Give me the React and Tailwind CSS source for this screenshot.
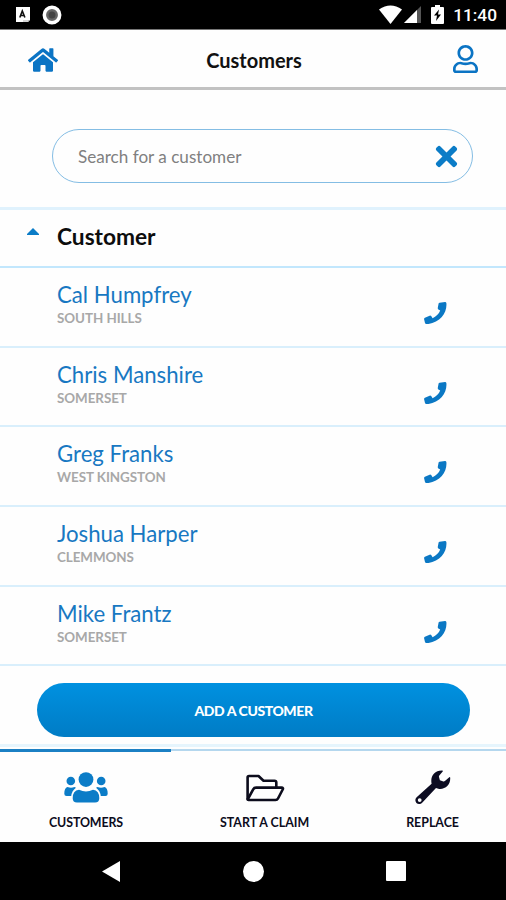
import React from "react";
import { FaHome, FaRegUser, FaTimes } from "react-icons/fa";

const customers = [
  { name: "Cal Humpfrey", city: "SOUTH HILLS" },
  { name: "Chris Manshire", city: "SOMERSET" },
  { name: "Greg Franks", city: "WEST KINGSTON" },
  { name: "Joshua Harper", city: "CLEMMONS" },
  { name: "Mike Frantz", city: "SOMERSET" },
];

function PhoneIcon() {
  return (
    <svg className="mt-[18px]" width="23" height="22" viewBox="0 0 23 22">
      <path
        d="M15.6.7 21 0q1.3 0 1.4 1.3C22.8 6 21.2 11 17.8 15 14.6 18.8 9.8 21.2 4.5 21.9L2.3 22q-1 0-1.3-1L.1 17.300q-.2-1.100.8-1.600L5.600 13.700q1-.3 1.600.4L8.600 16.200C12 14.800 14.900 11.800 16.200 8.500L14.400 7.400q-.8-.6-.6-1.600L14.600 1.600q.2-.8 1-.9z"
        fill="#0b78c4"
      />
    </svg>
  );
}

function UsersIcon() {
  return (
    <svg width="44" height="31" viewBox="0 0 44 31" fill="#0b7cc7">
      <circle cx="22" cy="7.6" r="7.4" />
      <circle cx="6.8" cy="9" r="4.3" />
      <circle cx="37.2" cy="9" r="4.3" />
      <path d="M15 17.7q7 3.4 14 0 6.3.5 6.3 8.6 0 4.2-4.3 4.2H13q-4.3 0-4.3-4.2 0-8.1 6.3-8.6z" />
      <path d="M3.5 15Q7 16.5 10.5 15l1.5.7Q7.800 18.800 7.200 24H2.500Q.3 24 .3 21.700.2 16 3.500 15z" />
      <path d="M40.500 15Q37 16.500 33.500 15l-1.500.7q4.200 3.100 4.800 8.300h4.700q2.200 0 2.200-2.300.1-5.700-3.200-6.700z" />
    </svg>
  );
}

function FolderIcon() {
  return (
    <svg width="40" height="28" viewBox="0 0 40 28" fill="none" stroke="#0c0c1c" strokeWidth="2.6" strokeLinejoin="round">
      <path d="M2.6 25.5V3.5q0-1.5 1.5-1.5H13.5L18.5 6.7H29.5q1.8 0 1.8 1.8V13.5" />
      <path d="M2.6 25.5 8.2 15.3q.9-1.7 2.8-1.7H36.5q2.2 0 1.2 1.9L33 24.5q-.8 1.5-2.5 1.5H3.5q-.9 0-.9-.5z" />
    </svg>
  );
}

function WrenchIcon() {
  return (
    <svg width="36" height="35" viewBox="0 0 36 35">
      <path
        fillRule="evenodd"
        d="M27.3.5q.9.2.4.9L24.3 5.5Q23.8 6.2 24 7L24.9 10.3 28.4 11.5q.8.2 1.5-.4L34.3 7.3q.8-.5.9.4C35.7 14.5 30.5 19.5 24.2 18.9q-1.7-.1-3.2-.8L7.4 32.5C5.4 34.6 2.8 34.4 1.4 32.9-.1 31.3 0 28.9 1.9 27.1L16.6 13.7C15 6.2 19.5.2 27.3.5zM4.7 28.2a1.9 1.9 0 1 0 0 3.8 1.9 1.9 0 1 0 0-3.8z"
        fill="#0c0c22"
      />
    </svg>
  );
}

function StatusBar() {
  return (
    <div className="flex h-[30px] shrink-0 items-center justify-between border-b border-[#777] bg-black pl-4 pr-[9px]">
      <div className="flex items-center gap-[11px]">
        <svg width="15" height="16" viewBox="0 0 15 16">
          <path d="M0 0h14v13l-2 2H0z" fill="#fff" />
          <path d="M3.8 10.5 6.3 4l2.6 6.5M5 8.5h2.8" fill="none" stroke="#111" strokeWidth="1.6" />
          <path d="M7 14h6v-1" fill="none" stroke="#aaa" strokeWidth="1" />
        </svg>
        <svg width="20" height="20" viewBox="0 0 20 20">
          <circle cx="10" cy="10" r="7.7" fill="#666" stroke="#fff" strokeWidth="3.5" />
          <circle cx="10" cy="10" r="3.5" fill="#444" />
        </svg>
      </div>
      <div className="flex items-center">
        <svg width="23" height="19" viewBox="0 0 23 19">
          <path d="M0 4.5Q11.5-3.5 23 4.5L11.5 19z" fill="#fff" />
        </svg>
        <svg className="ml-[2px]" width="17" height="18" viewBox="0 0 17 18">
          <path d="M17 1v17H0z" fill="#555" />
          <path d="M13 5v13H0z" fill="#fff" />
        </svg>
        <svg className="ml-[10px]" width="13" height="19" viewBox="0 0 13 19">
          <path d="M4 0h5v2h3q1 0 1 1v15q0 1-1 1H1q-1 0-1-1V3q0-1 1-1h3z" fill="#fff" />
          <path d="M8 4.5 3 10.5h3L5 16l5-6.5H7z" fill="#000" />
        </svg>
        <span className="ml-[9px] pt-[3px] font-['Roboto',sans-serif] text-[17.3px] font-medium leading-none text-white">11:40</span>
      </div>
    </div>
  );
}

export default function App() {
  return (
    <div className="flex h-[900px] w-[506px] flex-col overflow-hidden bg-[#fefefe] font-['Lato',sans-serif]">
      <StatusBar />
      <header className="grid h-[60px] shrink-0 grid-cols-[1fr_auto_1fr] items-center border-b-[3px] border-[#c2c2c2] px-7 text-[#0b74c4]">
        <FaHome className="mt-[3px] size-[30px]" />
        <h1 className="mt-[3px] pl-[2px] text-[20px] font-bold leading-none text-[#111]">Customers</h1>
        <FaRegUser className="h-[28px] w-[25px] justify-self-end" preserveAspectRatio="none" />
      </header>

      <div className="h-[117px] shrink-0 pl-[52px] pr-[33px] pt-[39px]">
        <div className="flex h-[54px] items-center justify-between rounded-full border border-[#84bde4] pl-[25px] pr-[11px]">
          <span className="pt-px text-[17.1px] leading-none text-[#808080]">Search for a customer</span>
          <FaTimes className="h-[31px] w-[29px] text-[#0b7cc7]" />
        </div>
      </div>

      <div className="flex h-[61px] shrink-0 items-center border-b-2 border-t-[3px] border-b-[#c2e7fd] border-t-[#e0f2fd] pl-[27px]">
        <svg className="mb-[13px]" width="12" height="7" viewBox="0 0 12 7">
          <path d="M0 7V6l6-6 6 6v1z" fill="#0b7cc7" />
        </svg>
        <h2 className="mb-px ml-[18px] text-[22.7px] font-bold leading-none text-[#0d0d0d]">Customer</h2>
      </div>

      <ul className="shrink-0">
        {customers.map((c) => (
          <li key={c.name} className="flex h-[79.7px] justify-between border-b-2 border-[#d9effc] pl-[57px] pr-[59px] pt-4">
            <div className="whitespace-nowrap">
              <p className="text-[22.2px] leading-[22px] text-[#1878c2]">{c.name}</p>
              <p className="mt-[5px] text-[13.4px] font-bold leading-[14px] tracking-[-0.05px] text-[#a8a8a8]">{c.city}</p>
            </div>
            <PhoneIcon />
          </li>
        ))}
      </ul>

      <div className="h-[80.5px] shrink-0 border-b-[3px] border-[#e6f5fd] pl-[37px] pr-[36px] pt-[17px]">
        <button className="flex h-[54px] w-full items-center justify-center rounded-full bg-linear-to-b from-[#0091e0] to-[#007cc5] pt-px text-[14px] font-black leading-none tracking-[-0.42px] text-white">
          ADD A CUSTOMER
        </button>
      </div>

      <nav className="flex flex-1 flex-col pt-[2px] text-[12.4px] font-bold leading-none text-[#0c0c1c]">
        <div className="h-[3px] border-t-2 border-[#b4d7ee]">
          <div className="-mt-[2px] h-[3px] w-[171px] bg-[#1b80c4]" />
        </div>
        <div className="flex flex-1 justify-between pl-[49px] pr-[47px] pt-[18px]">
          <div className="flex flex-col items-center">
            <div className="flex h-[36px] items-center"><UsersIcon /></div>
            <span className="mt-[11px] tracking-[-0.1px]">CUSTOMERS</span>
          </div>
          <div className="flex flex-col items-center">
            <div className="flex h-[36px] items-center"><FolderIcon /></div>
            <span className="mt-[11px]">START A CLAIM</span>
          </div>
          <div className="flex flex-col items-center">
            <div className="flex h-[36px] items-center"><WrenchIcon /></div>
            <span className="mt-[11px]">REPLACE</span>
          </div>
        </div>
      </nav>

      <div className="flex h-[58px] shrink-0 items-center bg-black pl-[102px]">
        <svg width="18" height="21" viewBox="0 0 18 21">
          <path d="M18 0v21L0 10.5z" fill="#fff" />
        </svg>
        <div className="ml-[123px] size-[21px] rounded-full bg-white" />
        <div className="ml-[122px] size-[20px] rounded-[1px] bg-white" />
      </div>
    </div>
  );
}
